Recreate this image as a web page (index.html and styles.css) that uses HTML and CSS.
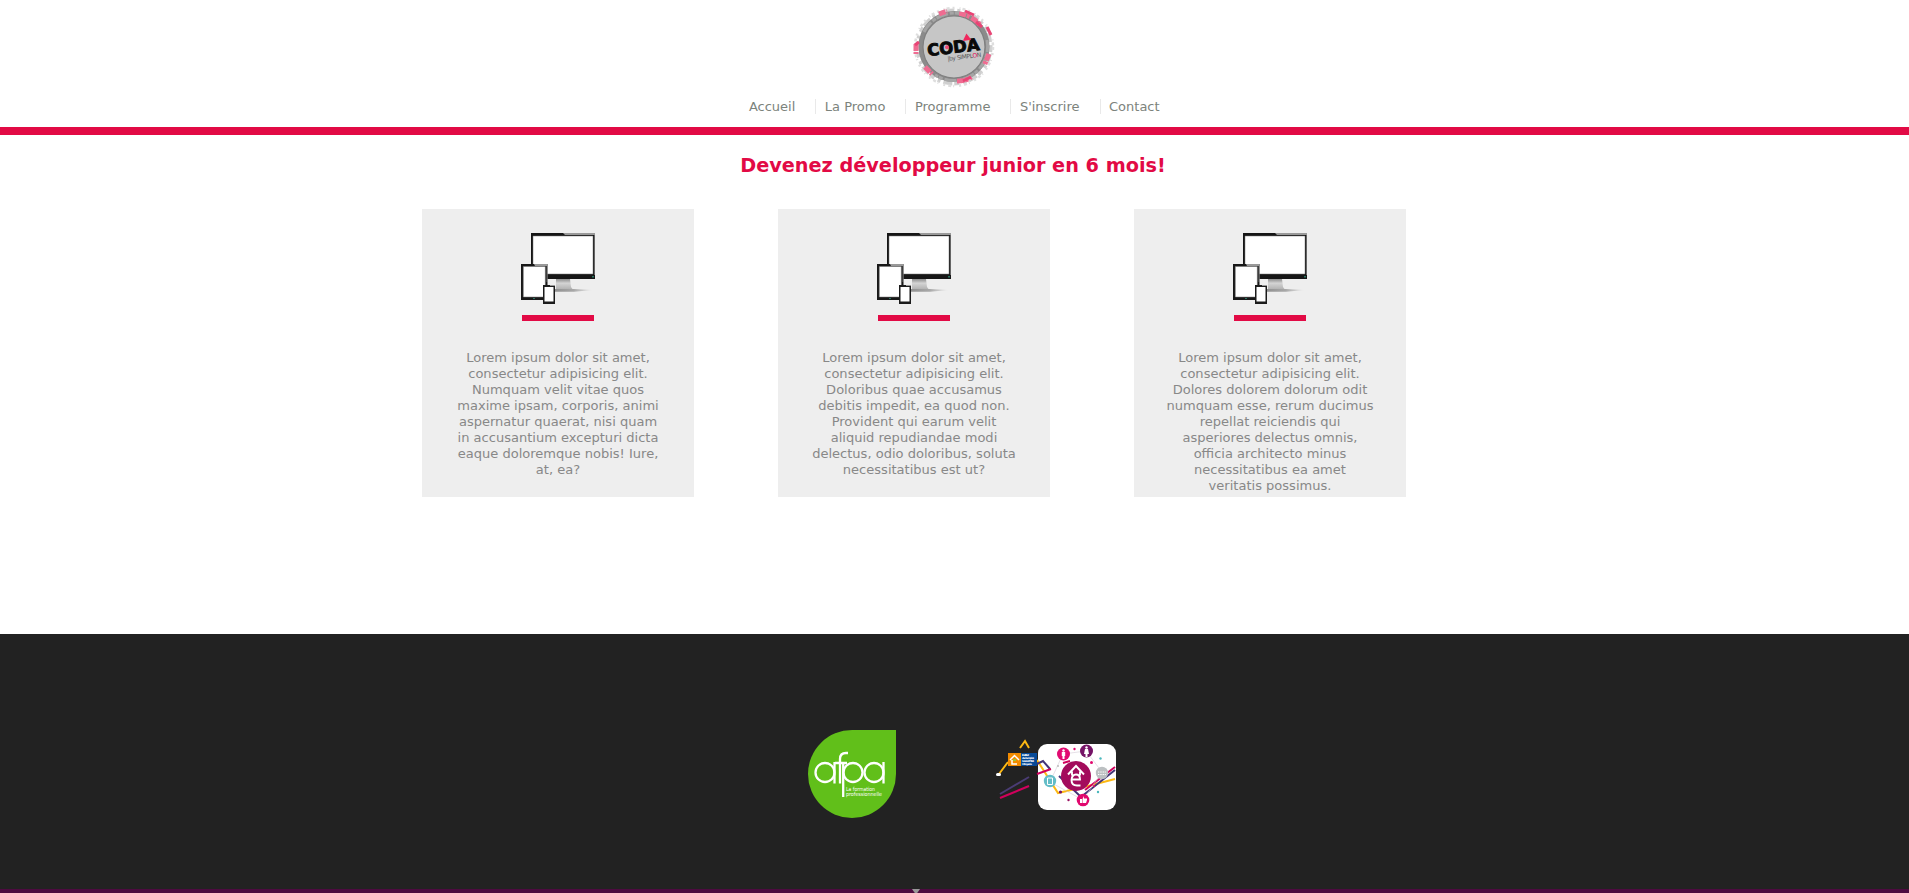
FILE: index.html
```html
<!DOCTYPE html>
<html lang="fr">
<head>
<meta charset="utf-8">
<title>CODA by Simplon</title>
<link rel="stylesheet" href="styles.css">
</head>
<body>
<svg width="0" height="0" class="defs" aria-hidden="true">
  <defs>
    <linearGradient id="stand" x1="0" y1="0" x2="0" y2="1"><stop offset="0" stop-color="#8d8d8d"/><stop offset=".35" stop-color="#d4d4d4"/><stop offset="1" stop-color="#a9a9a9"/></linearGradient>
    <linearGradient id="shade" x1="0" y1="0" x2="1" y2="0"><stop offset="0" stop-color="#909090"/><stop offset=".5" stop-color="#a8a8a8"/><stop offset="1" stop-color="#eeeeee"/></linearGradient>
  </defs>
  <symbol id="devices" viewBox="0 0 80 80">
    <path d="M36 46h14l1 8 3 4H36z" fill="url(#stand)"/>
    <path d="M34 56h20l19 1-19 1.800H34z" fill="url(#shade)"/>
    <path d="M11 0h64v46H11z" fill="#161616"/>
    <path d="M43 0h32v2H45z" fill="#999"/><path d="M74.300 2h.7v40h-.7z" fill="#888"/>
    <path d="M13 3h60v38H13z" fill="#fff" stroke="#777" stroke-width=".5"/>
    <path d="M72 43h2v1.500h-2z" fill="#28735f"/>
    <path d="M1 31h26.500v36H1z" fill="#181818"/>
    <path d="M14 31h13.500v18h-.8V33H15z" fill="#999"/>
    <path d="M3.300 33.500h22V64h-22z" fill="#fff" stroke="#777" stroke-width=".5"/>
    <path d="M13 65h2v1h-2z" fill="#28735f"/>
    <path d="M23 52h12v19H23z" fill="#1b1b1b"/>
    <path d="M30 52h5v1h-5z" fill="#999"/>
    <path d="M24.500 54h9v14.500h-9z" fill="#fff"/>
  </symbol>
</svg>
<header class="header">
  <svg class="logo" viewBox="0 0 84 84" role="img">
    <g fill="none">
      <circle cx="42" cy="42" r="36.500" stroke="#cfcfcf" stroke-width="4" stroke-dasharray="5 2 9 3 3 4"/>
      <circle cx="42" cy="42" r="39" stroke="#dedede" stroke-width="2.500" stroke-dasharray="3 3 2 5 1 2"/>
      <circle cx="42" cy="41.500" r="33" stroke="#8b8b8b" stroke-width="5"/>
      <path d="M12 27A34 34 0 0 1 54 10M75 35A34 34 0 0 1 23 70" stroke="#a5a5a5" stroke-width="3" stroke-dasharray="12 2 4 1"/>
      <path d="M47 9q13 1 22 12M4 39v10M77 49l-5 12M13 62l7 7M45 76q10 0 14-4M27 9l8-3" stroke="#ef6c91" stroke-width="5" stroke-dasharray="7 1 3 2"/>
      <path d="M53 6l9 4M75 22l4 8M7 37l-4 3M51 76l8-4M64 17l6 5" stroke="#e94475" stroke-width="3"/>
    </g>
    <circle cx="42" cy="42" r="31" fill="#c6c6c6" stroke="#7f7f7f" stroke-width="1.200"/>
    <g transform="rotate(-7 42 42)">
      <text class="logo-word" x="15" y="48" textLength="52.500" lengthAdjust="spacingAndGlyphs">CODA</text>
      <path d="M51.500 37l4.500-7 4 7z" fill="#ef285e"/>
      <circle cx="35" cy="41.500" r="2" fill="#ef4d7a"/>
      <text class="logo-by" x="34" y="55" textLength="34">|by SIMPL<tspan fill="#e5004f">O</tspan>N</text>
    </g>
  </svg>
  <nav>
    <ul class="menu">
      <li>Accueil</li><li>La Promo</li><li>Programme</li><li>S'inscrire</li><li>Contact</li>
    </ul>
  </nav>
</header>
<main class="main">
  <h1 class="title">Devenez développeur junior en 6 mois!</h1>
  <section class="cards">
    <article class="card">
      <svg class="devices"><use href="#devices"/></svg>
      <div class="bar"></div>
      <p>Lorem ipsum dolor sit amet, consectetur adipisicing elit. Numquam velit vitae quos maxime ipsam, corporis, animi aspernatur quaerat, nisi quam in accusantium excepturi dicta eaque doloremque nobis! Iure, at, ea?</p>
    </article>
    <article class="card">
      <svg class="devices"><use href="#devices"/></svg>
      <div class="bar"></div>
      <p>Lorem ipsum dolor sit amet, consectetur adipisicing elit. Doloribus quae accusamus debitis impedit, ea quod non. Provident qui earum velit aliquid repudiandae modi delectus, odio doloribus, soluta necessitatibus est ut?</p>
    </article>
    <article class="card">
      <svg class="devices"><use href="#devices"/></svg>
      <div class="bar"></div>
      <p>Lorem ipsum dolor sit amet, consectetur adipisicing elit. Dolores dolorem dolorum odit numquam esse, rerum ducimus repellat reiciendis qui asperiores delectus omnis, officia architecto minus necessitatibus ea amet veritatis possimus.</p>
    </article>
  </section>
</main>
<footer class="footer">
  <div class="partners">
    <svg class="afpa" viewBox="0 0 88 88" role="img">
      <path d="M44 0H88V44A44 44 0 1 1 44 0z" fill="#61bf1a"/>
      <g fill="none" stroke="#fff" stroke-width="2.300">
        <circle cx="17" cy="42.500" r="9.500"/><path d="M26.500 32v21.500"/>
        <path d="M40 23h-2q-6 0-6 6v24.500M27 33h12"/>
        <circle cx="45" cy="42.500" r="9.500"/><path d="M35.200 32v35"/>
        <circle cx="66" cy="42.500" r="9.500"/><path d="M75.500 32v21.500"/>
      </g>
      <text class="afpa-text" x="38" y="60.500" textLength="29" lengthAdjust="spacingAndGlyphs">La formation</text>
      <text class="afpa-text" x="38" y="66" textLength="36" lengthAdjust="spacingAndGlyphs">professionnelle</text>
    </svg>
    <svg class="network" viewBox="0 0 140 95" role="img">
      <g fill="none" stroke-width="2">
        <path d="M14 49l9-12M35 23l5-7 4 7" stroke="#fdb913"/>
        <path d="M15 69l29-17" stroke="#4a3c74"/><path d="M15 73l29-12" stroke="#d1005d"/>
      </g>
      <rect x="11" y="48" width="5" height="3" rx="1.500" fill="#fff"/>
      <rect x="53" y="19" width="78" height="66" rx="9" fill="#fff"/>
      <g fill="none" stroke-width="2">
        <path d="M52 35l21 33 34-8 23-6" stroke="#fdb913"/>
        <path d="M52 39l6-3 7 8M74 51l22 21 34-27" stroke="#433477"/>
        <path d="M52 49l14-5M100 65l30-23" stroke="#d1005d"/>
        <path d="M78 29l23-3 16 21-19 28-33-18z" stroke="#d5cbd6" stroke-width=".6"/>
      </g>
      <path d="M23 28h13v13H23z" fill="#f28b00"/><path d="M36 28h16v13H36z" fill="#064a98"/>
      <path d="M25 35l4.500-4.500L34 35M27 35v4h5" fill="none" stroke="#fff" stroke-width="1.500"/><path d="M28 34h3v2h-3z" fill="#9ec731"/>
      <g class="institute"><text x="37" y="31" textLength="7">Institut</text><text x="37" y="34" textLength="12">de l'emploi</text><text x="37" y="37" textLength="12">Grand Midi</text><text x="37" y="40" textLength="10">Citoyens</text></g>
      <circle cx="91" cy="51" r="15" fill="#a30b5c"/>
      <path d="M83 49.500l8-8.500 8 8.500M87 46.500v4M95 46.500v4M86.500 54.500h8.500q0-5-4-5t-4.500 5.500q0 5.500 5.500 5.500h3.500" fill="none" stroke="#fff" stroke-width="1.900"/>
      <path d="M78 38l7-2" stroke="#d1005d" stroke-width="2"/>
      <circle cx="78.500" cy="29" r="6.500" fill="#e10b72"/><circle cx="101.500" cy="26" r="6.500" fill="#751366"/>
      <circle cx="65" cy="56" r="6.200" fill="#63bdc7"/><circle cx="117" cy="48" r="6.200" fill="#bcc0c2"/><circle cx="98" cy="75" r="6.300" fill="#e1086e"/>
      <g fill="#fff"><circle cx="78.500" cy="25.500" r="1.200"/><path d="M76.800 27h3.400v4h-.700v3h-2v-3h-.700z"/><circle cx="101.500" cy="22.500" r="1.200"/><path d="M100 24h3l1 5h-1.500v3h-2v-3H99z"/><path d="M95 74h2v4h-2zM97.500 74l1.500-3v2.500h3v1.500l-1 3h-3.500z"/></g>
      <path d="M62.500 53h5v6.500h-5z" fill="none" stroke="#fff"/><path d="M113 47h8M113 49.500h8" stroke="#fff" stroke-dasharray="1 .7"/>
      <circle cx="106.500" cy="37.500" r="1.500" fill="#e1086e"/><circle cx="89.500" cy="24" r="1.200" fill="#e1086e"/><circle cx="115.500" cy="33.500" r="1.200" fill="#4ab8bd"/><circle cx="75.500" cy="67" r="1.600" fill="#751366"/><circle cx="83.500" cy="75" r="1.200" fill="#9b1262"/><circle cx="113" cy="67" r="1.200" fill="#4ab8bd"/><circle cx="73" cy="41" r="1" fill="#bbb"/><circle cx="109" cy="61" r="1" fill="#e1086e"/>
    </svg>
  </div>
  <div class="strip"><span class="arrow"></span></div>
</footer>
</body>
</html>
```

FILE: styles.css
```css
* { box-sizing: border-box; }
body {
  margin: 0;
  height: 893px;
  display: flex;
  flex-direction: column;
  overflow: hidden;
  background: #fff;
  color: #888;
  font: 13px/16px "DejaVu Sans", sans-serif;
}
.defs { position: absolute; }
.header {
  height: 135px;
  padding-top: 5px;
  border-bottom: 8px solid #e20a45;
  display: flex;
  flex-direction: column;
  align-items: center;
}
.logo { width: 84px; height: 84px; display: block; margin-right: 1px; }
.logo-word { font: bold 16.500px "DejaVu Sans", sans-serif; fill: #090909; stroke: #090909; stroke-width: .9; }
.logo-by { font: 6px "DejaVu Sans", sans-serif; fill: #555; }
.menu {
  list-style: none;
  display: flex;
  margin: 10px 0 0;
  padding: 0 0 0 1px;
  line-height: 15px;
  color: #7c837c;
}
.menu li { padding: 0 20px 0 8.500px; }
.menu li:last-child { padding-right: 10px; }
.menu li + li { border-left: 1px solid #e9e9e9; }
.title {
  margin: 20px 0 0;
  padding-right: 3px;
  text-align: center;
  color: #e20a45;
  font-size: 19.240px;
  line-height: 22px;
}
.main { height: 499px; }
.cards { display: flex; gap: 84px; padding: 32px 0 0 422px; }
.card {
  width: 272px;
  height: 288px;
  padding: 24px 32px 0;
  display: flex;
  flex-direction: column;
  align-items: center;
  background: #eee;
}
.devices { width: 80px; height: 80px; flex: none; margin-left: 4px; }
.bar { width: 72px; height: 6px; margin-top: 2px; background: #e20a45; flex: none; }
.card p { margin: 29px 0 0; text-align: center; font-size: 13.040px; }
.footer {
  flex: 1;
  display: flex;
  flex-direction: column;
  justify-content: space-between;
  background: #222;
}
.partners { display: flex; padding: 91px 0 0 808px; }
.afpa { width: 88px; height: 88px; margin-top: 5px; }
.afpa-text { font: 5.500px "DejaVu Sans", sans-serif; fill: #fff; }
.network { width: 140px; height: 95px; margin-left: 89px; }
.institute { font: bold 2.800px "DejaVu Sans", sans-serif; fill: #fff; }
.strip { height: 4px; padding-left: 912px; background: #4d0a40; }
.arrow { display: block; width: 8px; height: 4px; background: #999; clip-path: polygon(0 0, 100% 0, 65% 100%, 35% 100%); }
```
